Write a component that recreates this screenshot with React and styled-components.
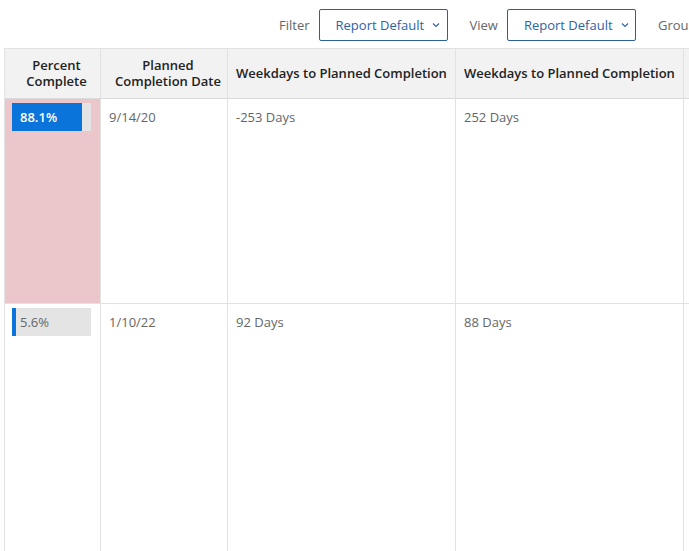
import React from "react";
import styled, { createGlobalStyle } from "styled-components";

const Global = createGlobalStyle`
  html, body { margin: 0; padding: 0; background: #fff; }
  body { font-family: "Open Sans", "Liberation Sans", sans-serif; overflow: hidden; }
`;

const Page = styled.div`
  width: 689px;
  height: 551px;
  overflow: hidden;
  position: relative;
`;

const Toolbar = styled.div`
  height: 48px;
  display: flex;
  align-items: center;
  padding: 2px 0 0 279px;
  box-sizing: border-box;
  white-space: nowrap;
`;

const Label = styled.span`
  font-size: 13px;
  color: #666;
  margin-right: 9px;
  flex-shrink: 0;
`;

const Select = styled.button`
  flex-shrink: 0;
  width: 129px;
  height: 32px;
  border: 1px solid #2b5f9e;
  border-radius: 2px;
  background: #fff;
  color: #2d62a8;
  font-family: inherit;
  font-size: 13px;
  display: flex;
  align-items: center;
  justify-content: flex-start;
  gap: 8px;
  padding: 0 0 0 16px;
  margin-right: 22px;
  box-sizing: border-box;
  cursor: pointer;
`;

const Table = styled.div`
  display: grid;
  grid-template-columns: 96px 127px 228px 228px 100px;
  margin-left: 4px;
  border-top: 1px solid #e2e2e2;
  border-left: 1px solid #e2e2e2;
`;

const Head = styled.div`
  height: 50px;
  background: #f2f2f2;
  border-right: 1px solid #e2e2e2;
  border-bottom: 1px solid #dadada;
  box-sizing: border-box;
  display: flex;
  align-items: center;
  justify-content: ${(p) => (p.$center ? "center" : "flex-start")};
  text-align: ${(p) => (p.$center ? "center" : "left")};
  padding: ${(p) => (p.$center ? "0 0 1px 8px" : "0 8px 1px 8px")};
  font-size: 13px;
  font-weight: 600;
  color: #222;
  line-height: 16px;
  white-space: ${(p) => (p.$center ? "normal" : "nowrap")};
`;

const Cell = styled.div`
  height: ${(p) => p.$h}px;
  background: ${(p) => (p.$pink ? "#ebc6ca" : "#fff")};
  border-right: 1px solid #e2e2e2;
  border-bottom: 1px solid #e2e2e2;
  box-sizing: border-box;
  padding: ${(p) => (p.$bar ? "4px 8px 0 7px" : "9px 8px 0 8px")};
  font-size: 13px;
  color: #666;
  line-height: 18px;
`;

const Bar = styled.div`
  position: relative;
  width: 79px;
  height: 28px;
  background: #e4e4e4;
  overflow: hidden;
`;

const Fill = styled.div`
  position: absolute;
  left: 0;
  top: 0;
  bottom: 0;
  background: #0a74da;
`;

const BarText = styled.span`
  position: absolute;
  left: 8px;
  top: 0;
  line-height: 28px;
  font-size: 13px;
  font-weight: ${(p) => (p.$light ? 600 : 400)};
  color: ${(p) => (p.$light ? "#fff" : "#666")};
`;

const Chevron = () => (
  <svg width="8" height="6" viewBox="0 0 8 6" fill="none">
    <path d="M1 1.5L4 4.5L7 1.5" stroke="#2d62a8" strokeWidth="1.1" />
  </svg>
);

const rows = [
  { pct: 88.1, date: "9/14/20", a: "-253 Days", b: "252 Days", h: 205, pink: true },
  { pct: 5.6, date: "1/10/22", a: "92 Days", b: "88 Days", h: 260, pink: false },
];

export default function App() {
  return (
    <Page>
      <Global />
      <Toolbar>
        <Label>Filter</Label>
        <Select>
          Report Default <Chevron />
        </Select>
        <Label>View</Label>
        <Select>
          Report Default <Chevron />
        </Select>
        <Label>Group</Label>
      </Toolbar>
      <Table>
        <Head $center>Percent Complete</Head>
        <Head $center>Planned Completion Date</Head>
        <Head>Weekdays to Planned Completion</Head>
        <Head>Weekdays to Planned Completion</Head>
        <Head />
        {rows.map((r, i) => (
          <React.Fragment key={i}>
            <Cell $h={r.h} $pink={r.pink} $bar>
              <Bar>
                <Fill style={{ width: `${r.pct}%` }} />
                <BarText $light={r.pct > 50}>{r.pct}%</BarText>
              </Bar>
            </Cell>
            <Cell $h={r.h}>{r.date}</Cell>
            <Cell $h={r.h}>{r.a}</Cell>
            <Cell $h={r.h}>{r.b}</Cell>
            <Cell $h={r.h} />
          </React.Fragment>
        ))}
      </Table>
    </Page>
  );
}
